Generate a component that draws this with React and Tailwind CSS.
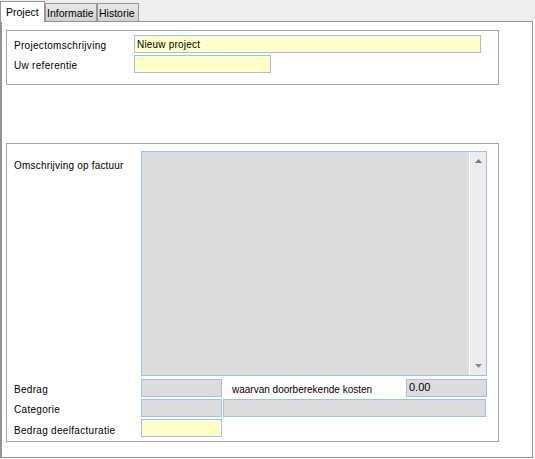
export default function App() {
  const inputYellow = "h-[18px] border border-[#a3bdf0] bg-[#ffffcc]";
  const inputGray = "h-[18px] border border-[#a3bdf0] bg-[#dcdcdc]";
  return (
    <div className="w-[535px] h-[459px] bg-white font-['Liberation_Sans',Arial,sans-serif] text-black overflow-hidden">
      <div className="h-[21px] bg-[#eeeeee] flex items-end">
        <div className="relative z-10 top-[1px] h-[21px] w-[45px] bg-white border border-b-0 border-[#96969a] text-[10.5px] leading-none pt-[5px] pl-[5px]">
          Project
        </div>
        <div className="h-[18px] w-[52px] bg-linear-to-b from-[#e9e9e9] to-[#d2d2d2] border border-b-0 border-[#96969a] text-[10.5px] leading-none pt-[4px] pl-[1px]">
          Informatie
        </div>
        <div className="h-[18px] w-[42px] bg-linear-to-b from-[#e9e9e9] to-[#d2d2d2] border border-b-0 border-[#96969a] text-[10.5px] leading-none pt-[4px] pl-[1px]">
          Historie
        </div>
      </div>
      <div className="w-[533px] h-[437px] border-t border-r border-b border-l-2 border-[#939398] bg-white pl-[4px] pt-[8px] text-[10px]">
        <div className="w-[493px] h-[55px] border border-[#a4a4a4] pt-[4px] pl-[7px] flex flex-col gap-[2px]">
          <div className="flex items-center">
            <div className="w-[120px] pt-[2px] tracking-[0.3px]">Projectomschrijving</div>
            <div className={`${inputYellow} w-[347px] flex items-center pl-[2px] tracking-[0.2px]`}>Nieuw project</div>
          </div>
          <div className="flex items-center">
            <div className="w-[120px] pt-[2px] tracking-[0.3px]">Uw referentie</div>
            <div className={`${inputYellow} w-[137px]`}></div>
          </div>
        </div>

        <div className="mt-[58px] w-[493px] h-[299px] border border-[#a4a4a4] pt-[7px] pl-[7px] flex flex-col">
          <div className="flex">
            <div className="w-[127px] pt-[7px] tracking-[0.2px]">Omschrijving op factuur</div>
            <div className="w-[346px] h-[225px] border border-[#a3bdf0] bg-[#dcdcdc] flex justify-end">
              <div className="w-[17px] h-full bg-[#ececec] border-l border-white flex flex-col justify-between items-center py-[7px]">
                <svg width="7" height="4" viewBox="0 0 7 4">
                  <path d="M3.5 0 L7 4 L0 4 Z" fill="#7a7a7a" />
                </svg>
                <svg width="7" height="4" viewBox="0 0 7 4">
                  <path d="M0 0 L7 0 L3.5 4 Z" fill="#8a8a8a" />
                </svg>
              </div>
            </div>
          </div>
          <div className="flex items-center mt-[2px]">
            <div className="w-[127px] pt-[4px] tracking-[0.3px]">Bedrag</div>
            <div className={`${inputGray} w-[81px]`}></div>
            <div className="w-[184px] pl-[10px] pt-[3px]">waarvan doorberekende kosten</div>
            <div className={`${inputGray} w-[81px] text-[11px] flex items-center pl-[2px]`}>0.00</div>
          </div>
          <div className="flex items-center mt-[1px]">
            <div className="w-[127px] pt-[4px] tracking-[0.3px]">Categorie</div>
            <div className={`${inputGray} w-[81px]`}></div>
            <div className={`${inputGray} w-[263px] ml-[1px]`}></div>
          </div>
          <div className="flex items-center mt-[1px]">
            <div className="w-[127px] pt-[5px] tracking-[0.3px]">Bedrag deelfacturatie</div>
            <div className={`${inputYellow} w-[81px]`}></div>
          </div>
        </div>
      </div>
    </div>
  );
}
